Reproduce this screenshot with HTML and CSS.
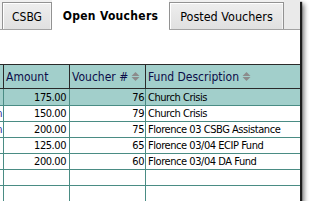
FILE: index.html
```html
<!DOCTYPE html>
<html>
<head>
<meta charset="utf-8">
<link rel="stylesheet" href="styles.css">
</head>
<body>
<div class="frame">
  <div class="tabstrip">
    <div class="tab tab-csbg">CSBG</div>
    <div class="tab tab-active">Open Vouchers</div>
    <div class="tab tab-posted">Posted Vouchers</div>
    <div class="tab-filler"></div>
  </div>
  <div class="spacer"></div>
  <div class="grid">
    <div class="cell hd c0"></div>
    <div class="cell hd c1">Amount</div>
    <div class="cell hd c2">Voucher #<svg class="sort" width="9" height="9" viewBox="0 0 9 9"><polygon points="0.5,4 4.5,0 8.5,4"/><polygon points="0.5,5 4.5,9 8.5,5"/></svg></div>
    <div class="cell hd c3">Fund Description<svg class="sort" width="9" height="9" viewBox="0 0 9 9"><polygon points="0.5,4 4.5,0 8.5,4"/><polygon points="0.5,5 4.5,9 8.5,5"/></svg></div>

    <div class="cell sel c0"></div>
    <div class="cell sel num">175.00</div>
    <div class="cell sel num num2">76</div>
    <div class="cell sel txt">Church Crisis</div>

    <div class="cell c0"><span class="frag">n</span></div>
    <div class="cell num">150.00</div>
    <div class="cell num num2">79</div>
    <div class="cell txt">Church Crisis</div>

    <div class="cell c0"><span class="frag">n</span></div>
    <div class="cell num">200.00</div>
    <div class="cell num num2">75</div>
    <div class="cell txt">Florence 03 CSBG Assistance</div>

    <div class="cell c0"></div>
    <div class="cell num">125.00</div>
    <div class="cell num num2">65</div>
    <div class="cell txt">Florence 03/04 ECIP Fund</div>

    <div class="cell c0"></div>
    <div class="cell num">200.00</div>
    <div class="cell num num2">60</div>
    <div class="cell txt">Florence 03/04 DA Fund</div>

    <div class="cell c0"></div>
    <div class="cell num"></div>
    <div class="cell num num2"></div>
    <div class="cell txt"></div>

    <div class="cell c0"></div>
    <div class="cell num"></div>
    <div class="cell num num2"></div>
    <div class="cell txt"></div>
  </div>
</div>
</body>
</html>
```
FILE: styles.css
```css
html, body {
  margin: 0;
  padding: 0;
  background: #ffffff;
}

body {
  font-family: "DejaVu Sans Condensed", "DejaVu Sans", sans-serif;
  font-stretch: condensed;
  font-size: 12px;
  color: #000000;
}

.frame {
  width: 300px;
  height: 201px;
  overflow: hidden;
  background: #ffffff;
  box-shadow: 2px 2px 1px #1c1c1c, 4px 4px 5px rgba(0, 0, 0, 0.55);
}

.tabstrip {
  display: flex;
  align-items: flex-end;
  height: 29px;
  background: #f0f0f0;
  border-bottom: 1px solid #a3a3a3;
  padding-left: 2px;
}

.tab {
  box-sizing: border-box;
  display: flex;
  align-items: center;
  justify-content: center;
  white-space: nowrap;
}

.tab-csbg,
.tab-posted {
  height: 27px;
  border: 1px solid #929292;
  border-bottom: none;
  background: linear-gradient(#eeeeee, #e0e0e0);
  box-shadow: inset 1px 1px 0 #ffffff, inset -1px 0 0 #f4f4f4;
  padding-top: 1px;
}

.tab-csbg {
  width: 50px;
}

.tab-active {
  width: 117px;
  height: 30px;
  margin-bottom: -1px;
  background: #ffffff;
  font-weight: bold;
  font-size: 12px;
  letter-spacing: 0.3px;
  padding-top: 2px;
}

.tab-posted {
  width: 115px;
  font-size: 12.5px;
}

.tab-filler {
  flex: 1;
  height: 29px;
  background: #eaeaea;
}

.spacer {
  height: 34px;
}

.grid {
  display: grid;
  grid-template-columns: 4px 66px 76px 154px;
  grid-template-rows: 25px 17px repeat(6, 16px);
}

.cell {
  box-sizing: border-box;
  border-right: 1px solid #4a8c84;
  border-bottom: 1px solid #4a8c84;
  display: flex;
  align-items: center;
  white-space: nowrap;
  overflow: hidden;
  color: #000000;
  font-size: 11px;
  letter-spacing: -0.45px;
}

.hd {
  background: #a2cfcb;
  border-top: 1px solid #2a2a2a;
  border-bottom: 1px solid #2a2a2a;
  border-right: 1px solid #2a2a2a;
  color: #0c0c48;
  padding-left: 2px;
  font-size: 12px;
  letter-spacing: 0;
}

.hd.c0 {
  padding-left: 0;
}

.c3 {
  border-right: none;
}

.sort {
  margin-left: 3px;
  fill: #8c8c8c;
  flex: none;
}

.sel {
  background: #a2cfcb;
}

.num {
  justify-content: flex-end;
  padding-right: 3px;
}

.num2 {
  padding-right: 1px;
}

.txt {
  padding-left: 2px;
  border-right: none;
}

.c0 {
  justify-content: flex-end;
}

.frag {
  color: #2a2a9a;
  flex: none;
  margin-right: 1px;
}
```
